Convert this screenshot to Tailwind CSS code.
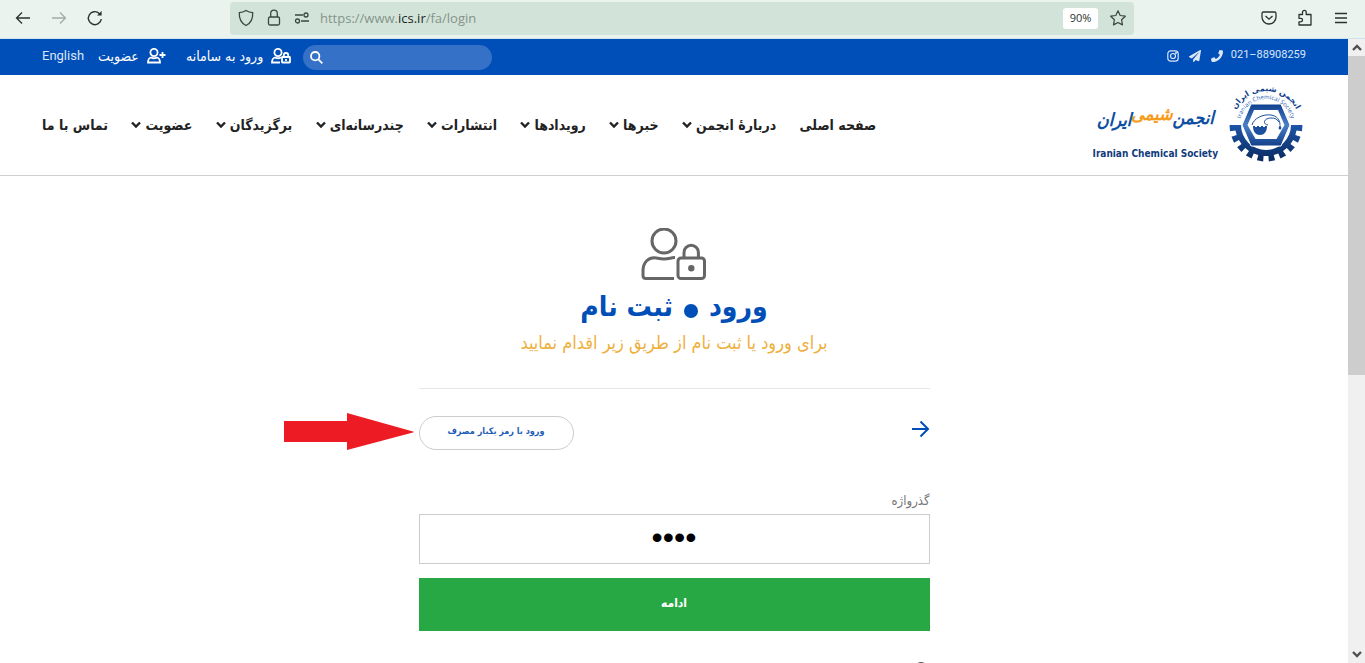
<!DOCTYPE html>
<html lang="fa">
<head>
    <meta charset="UTF-8">
    <meta name="viewport" content="width=device-width, initial-scale=1.0">
    <title>ورود - انجمن شیمی ایران</title>
    <script src="https://cdn.jsdelivr.net/npm/@tailwindcss/browser@4"></script>
</head>
<body class="h-screen flex flex-col overflow-hidden bg-white text-[#212529] font-['DejaVu_Sans_Condensed','DejaVu_Sans',sans-serif]">
    <!-- Icons used more than once -->
    <svg class="hidden">
        <symbol id="chevron" viewBox="0 0 10 8"><path d="M1 1.500l4 4 4-4" fill="none" stroke="currentColor" stroke-width="2.4"/></symbol>
    </svg>

    <!-- Browser toolbar -->
    <div class="h-[39px] shrink-0 flex items-center pl-[14px] pr-4 pb-[2px] bg-[#eaf3ed] border-b border-[#cfe3ee] text-[#2b332e]">
        <button aria-label="Back"><svg class="w-[18px] h-[18px]" viewBox="0 0 18 18" fill="none" stroke="currentColor" stroke-width="1.3"><path d="M16 9H2.500M8 3.500L2.500 9 8 14.500"/></svg></button>
        <button aria-label="Forward" class="ml-[18px] text-[#a3aca6]"><svg class="w-[18px] h-[18px]" viewBox="0 0 18 18" fill="none" stroke="currentColor" stroke-width="1.3"><path d="M2 9h13.500M10 3.500L15.500 9 10 14.500"/></svg></button>
        <button aria-label="Reload" class="ml-[18px]"><svg class="w-[18px] h-[18px]" viewBox="0 0 18 18" fill="none" stroke="currentColor" stroke-width="1.4"><path d="M15.300 10a6.500 6.500 0 1 1-2-5.600l1.200 1.200"/><path d="M15.600 2v4.600H11z" fill="currentColor" stroke="none"/></svg></button>

        <div class="ml-[126px] w-[904px] h-[33px] flex items-center px-2 rounded bg-[#d2e4d9]">
            <svg class="w-4 h-[18px]" viewBox="0 0 16 18" fill="none" stroke="#3b463f" stroke-width="1.3"><path d="M8 1.500c2 1.300 4 2 6.700 2.200C15 10 13 14 8 16.500 3 14 1 10 1.300 3.700 4 3.500 6 2.800 8 1.500z"/></svg>
            <svg class="ml-3 w-4 h-[18px]" viewBox="0 0 16 18" fill="none" stroke="#3b463f" stroke-width="1.3"><rect x="2.500" y="8" width="11" height="8" rx="1.500"/><path d="M4.700 8V4.500a3.300 3.300 0 0 1 6.600 0V8"/></svg>
            <svg class="ml-3 w-4 h-4" viewBox="0 0 16 16" fill="none" stroke="#3b463f" stroke-width="1.3"><path d="M1 5h8M7 11h8"/><circle cx="12" cy="5" r="2"/><circle cx="3.500" cy="11" r="2"/></svg>
            <div class="ml-[10px] pt-[2px] flex-1 text-[13px] font-['Open_Sans',sans-serif] text-[#85938a]">https://www.<span class="text-[#1c241f]">ics.ir</span>/fa/login</div>
            <button class="w-[35px] h-[21px] rounded-[3px] bg-white text-[11px] font-['Open_Sans',sans-serif]">90%</button>
            <button aria-label="Bookmark" class="ml-3"><svg class="w-4 h-4" viewBox="0 0 16 16" fill="none" stroke="#3b463f" stroke-width="1.2" stroke-linejoin="round"><path d="M8 .8l2.200 4.700 5.100.7-3.700 3.600.9 5.100L8 12.500l-4.500 2.400.9-5.100L.7 6.200l5.100-.7z"/></svg></button>
        </div>

        <button aria-label="Pocket" class="ml-auto"><svg class="w-4 h-4" viewBox="0 0 16 16" fill="none" stroke="currentColor" stroke-width="1.3"><path d="M2.500 2h11a1.500 1.500 0 0 1 1.500 1.500V7A7 7 0 0 1 1 7V3.500A1.500 1.500 0 0 1 2.500 2z"/><path d="M4.500 6L8 9.200 11.500 6"/></svg></button>
        <button aria-label="Extensions" class="ml-5"><svg class="w-4 h-[18px]" viewBox="0 0 16 18" fill="none" stroke="currentColor" stroke-width="1.3" stroke-linejoin="round"><path d="M2 5.500h3.500V3.200a1.800 1.800 0 0 1 3.700 0v2.300H14V16H2v-3.200h1.800a1.700 1.700 0 0 0 0-3.500H2z"/></svg></button>
        <button aria-label="Menu" class="ml-5"><svg class="w-4 h-4" viewBox="0 0 16 16" stroke="currentColor" stroke-width="1.3"><path d="M2 3.500h12M2 8h12M2 12.500h12"/></svg></button>
    </div>

    <div class="flex-1 min-h-0 flex">
        <div class="flex-1 min-w-0 overflow-hidden" dir="rtl">
            <!-- Top bar -->
            <div class="h-9 flex items-center justify-between px-[42px] bg-[#004eb8] text-white">
                <div class="flex items-center gap-2 pb-[3px] text-[#dbe7f7]">
                    <a href="tel:02188908259" class="text-[11px] font-['Roboto',sans-serif]" dir="ltr">021–88908259</a>
                    <svg class="w-3 h-3" viewBox="0 0 512 512" fill="currentColor"><path d="M493 25L389 1c-11-3-23 3-27 14l-48 112c-4 10-1 21 7 28l61 50c-36 76-99 140-177 177l-50-61c-7-8-18-11-28-7L15 362c-11 5-17 16-14 28l24 104c3 11 12 18 24 18 256 0 463-207 463-464 0-11-8-21-19-23z"/></svg>
                    <a href="#" aria-label="Telegram" class="mr-[2px]"><svg class="w-3 h-3" viewBox="0 0 512 512" fill="currentColor"><path d="M476 3L12 271c-18 10-16 35 2 43l106 44L408 105c5-5 13 2 8 8L175 407v80c0 24 28 33 42 16l64-77 125 52c14 6 30-3 33-19l72-432c3-20-18-35-35-24z"/></svg></a>
                    <a href="#" aria-label="Instagram" class="mr-[2px]"><svg class="w-3 h-3" viewBox="0 0 12 12" fill="none" stroke="currentColor" stroke-width="1.2"><rect x=".8" y=".8" width="10.400" height="10.400" rx="3"/><circle cx="6" cy="6" r="2.500"/><circle cx="9" cy="3" r=".4" fill="currentColor"/></svg></a>
                </div>
                <div class="flex items-center text-[14px]">
                    <form class="w-[189px] h-[25px] flex items-center rounded-full bg-[#3571c6]" dir="ltr">
                        <button aria-label="جستجو" class="pl-[7px]"><svg class="w-[13px] h-[13px]" viewBox="0 0 13 13" fill="none" stroke="#fff" stroke-width="1.8"><circle cx="5.200" cy="5.200" r="4.200"/><path d="M8.300 8.300l4 4"/></svg></button>
                        <input type="search" aria-label="جستجو" class="flex-1 min-w-0 px-2 bg-transparent outline-none">
                    </form>
                    <a href="#" class="mr-3 pb-[2px] flex items-center gap-2">
                        <svg class="w-5 h-4" viewBox="0 0 20 16" fill="none" stroke="#fff" stroke-width="1.8"><circle cx="7" cy="4.500" r="3.600"/><path d="M10 9.500c-2 1-4 1-6 0-2 .5-3 2-3 5h8"/><rect x="11" y="9" width="8" height="5.500" rx=".5"/><path d="M12.800 9V7.200a2.200 2.200 0 0 1 4.400 0V9M15 11v2"/></svg>
                        ورود به سامانه
                    </a>
                    <a href="#" class="mr-5 pb-[2px] flex items-center gap-2">
                        <svg class="w-[19px] h-4" viewBox="0 0 19 16" fill="none" stroke="#fff" stroke-width="1.8"><circle cx="7" cy="4.500" r="3.600"/><path d="M4 9.500c2 1 4 1 6 0 2 .5 3 2 3 5H1c0-3 1-4.500 3-5zM15.500 4v6M12.500 7h6"/></svg>
                        عضویت
                    </a>
                    <a href="#" class="mr-[14px] pb-[2px] text-[13px] font-['Roboto',sans-serif] text-[#dbe7f7]">English</a>
                </div>
            </div>

            <!-- Header -->
            <header class="h-[101px] flex items-center justify-between px-[42px] border-b border-[#cfcfcf]">
                <a href="#" class="flex items-center gap-2">
                    <svg class="w-20 h-20 overflow-visible" viewBox="-40 -40 80 80" direction="ltr">
                        <defs>
                            <linearGradient id="steel" x1="0" y1="0" x2="0" y2="1"><stop offset="0" stop-color="#0f3f8e"/><stop offset=".5" stop-color="#4a7fc6"/><stop offset="1" stop-color="#123f8a"/></linearGradient>
                            <linearGradient id="gear" x1="0" y1="0" x2="0" y2="1"><stop offset="0" stop-color="#1d55a8"/><stop offset="1" stop-color="#0a2a60"/></linearGradient>
                            <path id="arc-en" d="M-26 0A26 26 0 0 1 26 0"/>
                            <path id="arc-fa" d="M-34 0A34 34 0 0 1 34 0"/>
                        </defs>
                        <path id="teeth" fill="url(#gear)"/>
                        <path d="M-15 -21h30L24 0 15 21h-30L-24 0z" fill="url(#steel)" stroke="#fff"/>
                        <path d="M-12 -15h24L18.500 0 10.500 14h-21L-18.500 0z" fill="#fff"/>
                        <path d="M-13 1h2v1h2v-1h2v1h2v-1h2v1h2v-1h2c0 6-3 9-7 9s-7-3-7-9z" fill="#1d4f9f"/>
                        <path d="M-14 0C-12 -7 -3 -11 5 -10c6 1 9 5 9 10M2 0C-4 -1 -2 -7 5 -7c4 0 6 1 8 4" fill="none" stroke="#1d4f9f" stroke-width="1"/>
                        <path d="M14 0c2 3 1.500 4.500 0 4.500s-2-1.500 0-4.500z" fill="#1d4f9f"/>
                        <text font-family="Open Sans" font-size="6" fill="#2a62b5" text-anchor="middle"><textPath href="#arc-en" startOffset="50%">Iranian Chemical Society</textPath></text>
                        <text font-family="DejaVu Sans" font-size="8" font-weight="bold" fill="#123f8a" text-anchor="middle" direction="rtl"><textPath href="#arc-fa" startOffset="50%">انجمن شیمی ایران</textPath></text>
                    </svg>
                    <span class="flex flex-col items-center">
                        <!-- Wordmark: the middle word sits higher than its neighbours -->
                        <span class="h-[58px] flex items-center text-[18px] italic font-bold text-[#0f4fa3]"><span>انجمن</span><span class="pb-2 text-[#f59c1c]">شیمی</span><span class="pt-1">ایران</span></span>
                        <span class="h-4 text-[10px] leading-4 font-bold text-[#113a7c]" dir="ltr">Iranian Chemical Society</span>
                    </span>
                </a>
                <nav class="w-[66%] flex items-center justify-between text-[14px] font-semibold text-[#222]">
                    <a href="#">صفحه اصلی</a>
                    <button class="flex items-center gap-1">دربارهٔ انجمن<svg class="w-[10px] h-2"><use href="#chevron"/></svg></button>
                    <button class="flex items-center gap-1">خبرها<svg class="w-[10px] h-2"><use href="#chevron"/></svg></button>
                    <button class="flex items-center gap-1">رویدادها<svg class="w-[10px] h-2"><use href="#chevron"/></svg></button>
                    <button class="flex items-center gap-1">انتشارات<svg class="w-[10px] h-2"><use href="#chevron"/></svg></button>
                    <button class="flex items-center gap-1">چندرسانه‌ای<svg class="w-[10px] h-2"><use href="#chevron"/></svg></button>
                    <button class="flex items-center gap-1">برگزیدگان<svg class="w-[10px] h-2"><use href="#chevron"/></svg></button>
                    <button class="flex items-center gap-1">عضویت<svg class="w-[10px] h-2"><use href="#chevron"/></svg></button>
                    <a href="#">تماس با ما</a>
                </nav>
            </header>

            <!-- Login -->
            <main class="w-[511px] max-w-full mx-auto pt-[52px]">
                <div class="flex flex-col items-center">
                    <svg class="w-[66px] h-[54px]" viewBox="0 0 66 54" fill="none" stroke="#666" stroke-width="3"><circle cx="23" cy="13" r="12"/><path d="M34 29.500c-2 0-3 0-5 .8q-6 1.500-12 0C7 28 2 35 2 43v4.500q0 3 3 3h28"/><rect x="37" y="30" width="26.500" height="20.500" rx="3"/><path d="M43 30v-5.500a7.200 7.200 0 0 1 14.400 0V30"/><circle cx="50.300" cy="40.300" r="1.700" fill="#666"/></svg>
                    <h1 class="h-[49px] flex items-center gap-[11px] text-[28px] font-bold text-[#004eb8]">ورود<span class="size-[14px] mt-2 rounded-full bg-[#004eb8]"></span>ثبت نام</h1>
                    <p class="h-6 leading-6 text-[18px] text-[#eeb03c]">برای ورود یا ثبت نام از طریق زیر اقدام نمایید</p>
                </div>
                <hr class="mt-[33px] mb-[27px] border-[#e6e6e6]">
                <form>
                    <div class="flex justify-between">
                        <button type="button" aria-label="بازگشت" class="h-[26px]"><svg class="w-[18px] h-[18px]" viewBox="0 0 18 18" fill="none" stroke="#004eb8" stroke-width="2"><path d="M0 9h16M8.500 1.500L16 9l-7.500 7.500"/></svg></button>
                        <div class="relative">
                            <button type="button" class="w-[155px] h-[34px] pb-[2px] rounded-full border border-[#ccc] text-[9px] font-bold text-[#1d5cb8]">ورود با رمز یکبار مصرف</button>
                            <svg class="absolute right-[160px] -top-[3px] w-[130px] h-[37px]" viewBox="0 0 130 37" fill="#ed1c24"><path d="M0 8h63V0l66 18.500q2 .5 0 1L63 37v-8H0z"/></svg>
                        </div>
                    </div>
                    <label for="password" class="block mt-[41px] mb-[3px] text-[13px] leading-5 text-[#777]">گذرواژه</label>
                    <input id="password" type="password" value="1234" class="block w-full h-[50px] pb-1 border border-[#ccc] text-center text-[32px] text-black font-['Liberation_Sans',sans-serif]">
                    <button class="mt-[14px] w-full h-[53px] pb-1 bg-[#28a745] text-[12px] font-bold text-white">ادامه</button>
                </form>
                <svg class="mt-[30px] w-5 h-5" viewBox="0 0 20 20" fill="none" stroke="#555" stroke-width="2"><circle cx="11" cy="7" r="5"/></svg>
            </main>
        </div>

        <!-- Scrollbar -->
        <div class="w-[17px] flex flex-col items-center bg-[#f0f0f0] text-[#505050]">
            <svg class="w-[10px] h-[17px] shrink-0 rotate-180"><use href="#chevron"/></svg>
            <div class="w-full h-[319px] bg-[#cdcdcd]"></div>
            <svg class="w-[10px] h-[17px] mt-auto"><use href="#chevron"/></svg>
        </div>
    </div>

    <script>
        // Lower half of the gear: a ring with evenly spaced teeth
        const steps = 10;
        const at = (r, deg) => {
            const a = deg * Math.PI / 180;
            return `${(r * Math.cos(a)).toFixed(2)} ${(r * Math.sin(a)).toFixed(2)}`;
        };
        const outline = [];
        for (let i = 0; i < steps; i++) {
            const mid = 5 + i * 170 / (steps - 1);
            outline.push(at(31, mid - 5), at(36.5, mid - 5), at(36.5, mid + 5), at(31, mid + 5));
        }
        document.getElementById('teeth').setAttribute('d', `M25 0L${outline.join('L')}L-25 0A25 25 0 0 0 25 0z`);
    </script>
</body>
</html>
